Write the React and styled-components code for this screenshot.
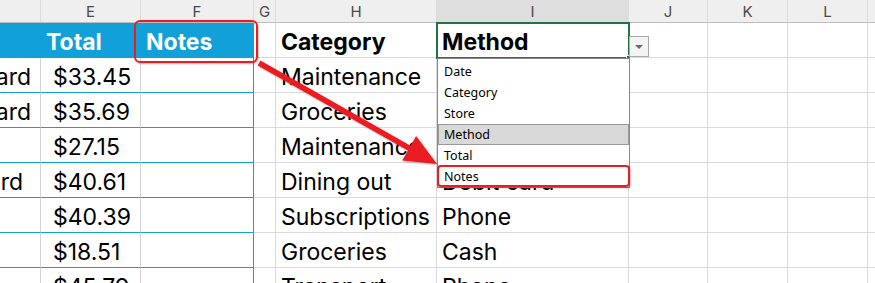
import React from 'react';
import styled, { createGlobalStyle, css } from 'styled-components';

const GlobalStyle = createGlobalStyle`
  html, body {
    margin: 0;
    padding: 0;
    background: #ffffff;
    overflow: hidden;
  }
  * { box-sizing: border-box; }
`;

const BLUE = '#12a0d8';
const GRID = '#dadada';
const RED = '#ea1c24';

// column widths, D..M (D and M are cut by the window)
const COLS = [
  { key: 'D', width: 41 },
  { key: 'E', width: 100 },
  { key: 'F', width: 113 },
  { key: 'G', width: 22 },
  { key: 'H', width: 161 },
  { key: 'I', width: 192 },
  { key: 'J', width: 79 },
  { key: 'K', width: 80 },
  { key: 'L', width: 80 },
  { key: 'M', width: 100 },
];

const Sheet = styled.div`
  position: relative;
  width: 875px;
  height: 283px;
  overflow: hidden;
  font-family: Inter, "Liberation Sans", sans-serif;
`;

const HeaderRow = styled.div`
  display: flex;
  height: 23px;
  background: #efefef;
  border-bottom: 1px solid #bdbdbd;
`;

const ColLetter = styled.div`
  flex: 0 0 ${(p) => p.$w}px;
  display: flex;
  align-items: center;
  justify-content: center;
  padding-top: 1px;
  border-right: 1px solid #dcdcdc;
  font-size: 15px;
  color: #4a4a4a;
  background: ${(p) => (p.$selected ? '#dedede' : 'transparent')};
`;

const Row = styled.div`
  display: flex;
  height: 35px;
`;

const Cell = styled.div`
  flex: 0 0 ${(p) => p.$w}px;
  display: flex;
  align-items: center;
  overflow: hidden;
  white-space: nowrap;
  padding: 3px 5px 0;
  font-size: 23px;
  color: #000;
  border-right: 1px solid ${GRID};
  border-bottom: 1px solid ${GRID};
  justify-content: ${(p) => (p.$right ? 'flex-end' : 'flex-start')};
  ${(p) => p.$pr != null && css`padding-right: ${p.$pr}px;`}
  ${(p) => p.$pl != null && css`padding-left: ${p.$pl}px;`}
  ${(p) => p.$bold && css`font-weight: 700;`}
  ${(p) =>
    p.$head &&
    css`
      background: ${BLUE};
      color: #fff;
      font-weight: 700;
      border-right-color: ${BLUE};
      border-bottom-color: ${BLUE};
    `}
  ${(p) =>
    p.$body &&
    css`
      border-bottom-color: ${BLUE};
      border-right-color: ${p.$edge ? BLUE : '#d4d4d4'};
    `}
`;

const Selection = styled.div`
  position: absolute;
  left: 436px;
  top: 22px;
  width: 194px;
  height: 37px;
  border: 2px solid #217346;
  pointer-events: none;
`;

const FillHandle = styled.div`
  position: absolute;
  left: 626px;
  top: 55px;
  width: 5px;
  height: 5px;
  background: #217346;
  border: 1px solid #fff;
`;

const DropButton = styled.div`
  position: absolute;
  left: 629px;
  top: 36px;
  width: 20px;
  height: 21px;
  background: #f3f3f3;
  border: 1px solid #a9a9a9;
  display: flex;
  align-items: center;
  justify-content: center;
  &::after {
    content: '';
    border-left: 4px solid transparent;
    border-right: 4px solid transparent;
    border-top: 4px solid #6a6a6a;
  }
`;

const DropList = styled.div`
  position: absolute;
  left: 437px;
  top: 58px;
  width: 193px;
  height: 130px;
  background: #fff;
  border: 1px solid #8a8a8a;
  padding-top: 2px;
  display: flex;
  flex-direction: column;
`;

const DropItem = styled.div`
  height: 21px;
  display: flex;
  align-items: center;
  padding-left: 6px;
  font-family: "Noto Sans", "Open Sans", sans-serif;
  font-size: 12.5px;
  color: #000;
  ${(p) =>
    p.$active &&
    css`
      background: #d9d9d9;
      border: 1px solid #9a9a9a;
      padding-left: 5px;
    `}
`;

const Callout = styled.div`
  position: absolute;
  left: ${(p) => p.$x}px;
  top: ${(p) => p.$y}px;
  width: ${(p) => p.$w}px;
  height: ${(p) => p.$h}px;
  border: 2px solid ${RED};
  border-radius: ${(p) => p.$r}px;
  box-shadow: 1px 1px 2px rgba(0, 0, 0, 0.25);
  pointer-events: none;
`;

const ArrowLayer = styled.svg`
  position: absolute;
  left: 0;
  top: 0;
  pointer-events: none;
`;

const rows = [
  { d: ['Credit card', 9], e: '$33.45', h: 'Maintenance', i: 'Credit card' },
  { d: ['Credit card', 9], e: '$35.69', h: 'Groceries', i: 'Credit card' },
  { d: null, e: '$27.15', h: 'Maintenance', i: 'Cash' },
  { d: ['Debit card', 17], e: '$40.61', h: 'Dining out', i: 'Debit card' },
  { d: null, e: '$40.39', h: 'Subscriptions', i: 'Phone' },
  { d: null, e: '$18.51', h: 'Groceries', i: 'Cash' },
  { d: null, e: '$45.79', h: 'Transport', i: 'Phone' },
];

const options = ['Date', 'Category', 'Store', 'Method', 'Total', 'Notes'];

const w = (k) => COLS.find((c) => c.key === k).width;

const Arrow = () => {
  // shaft from the Notes header call-out to the Notes option
  const sx = 259, sy = 63, tx = 437, ty = 164;
  const dx = tx - sx, dy = ty - sy;
  const len = Math.hypot(dx, dy);
  const ux = dx / len, uy = dy / len;
  const nx = -uy, ny = ux;
  const L = 32, W = 14;
  const bx = tx - L * ux, by = ty - L * uy;
  const head = `${tx},${ty} ${bx + W * nx},${by + W * ny} ${bx - W * nx},${by - W * ny}`;
  return (
    <ArrowLayer width="875" height="283">
      <defs>
        <filter id="sh" x="-10%" y="-10%" width="120%" height="120%">
          <feDropShadow dx="1" dy="1" stdDeviation="1" floodOpacity="0.3" />
        </filter>
      </defs>
      <g filter="url(#sh)">
        <line x1={sx} y1={sy} x2={bx + 2 * ux} y2={by + 2 * uy} stroke={RED} strokeWidth="5.5" />
        <polygon points={head} fill={RED} />
      </g>
    </ArrowLayer>
  );
};

const App = () => (
  <>
    <GlobalStyle />
    <Sheet>
      <HeaderRow>
        {COLS.map((c) => (
          <ColLetter key={c.key} $w={c.width} $selected={c.key === 'I'}>
            {c.key === 'D' || c.key === 'M' ? '' : c.key}
          </ColLetter>
        ))}
      </HeaderRow>

      <Row>
        <Cell $w={w('D')} $head />
        <Cell $w={w('E')} $head>Total</Cell>
        <Cell $w={w('F')} $head>Notes</Cell>
        <Cell $w={w('G')} />
        <Cell $w={w('H')} $bold>Category</Cell>
        <Cell $w={w('I')} $bold>Method</Cell>
        <Cell $w={w('J')} />
        <Cell $w={w('K')} />
        <Cell $w={w('L')} />
        <Cell $w={w('M')} />
      </Row>

      {rows.map((r, idx) => (
        <Row key={idx}>
          <Cell $w={w('D')} $body $right $pr={r.d ? r.d[1] : 5}>
            {r.d ? r.d[0] : ''}
          </Cell>
          <Cell $w={w('E')} $body $pl={12}>{r.e}</Cell>
          <Cell $w={w('F')} $body $edge />
          <Cell $w={w('G')} />
          <Cell $w={w('H')}>{r.h}</Cell>
          <Cell $w={w('I')}>{r.i}</Cell>
          <Cell $w={w('J')} />
          <Cell $w={w('K')} />
          <Cell $w={w('L')} />
          <Cell $w={w('M')} />
        </Row>
      ))}

      <Selection />
      <FillHandle />
      <DropButton />
      <DropList>
        {options.map((o) => (
          <DropItem key={o} $active={o === 'Method'}>{o}</DropItem>
        ))}
      </DropList>

      <Callout $x={134} $y={20} $w={124} $h={43} $r={6} />
      <Callout $x={437} $y={165} $w={193} $h={22} $r={4} />
      <Arrow />
    </Sheet>
  </>
);

export default App;
